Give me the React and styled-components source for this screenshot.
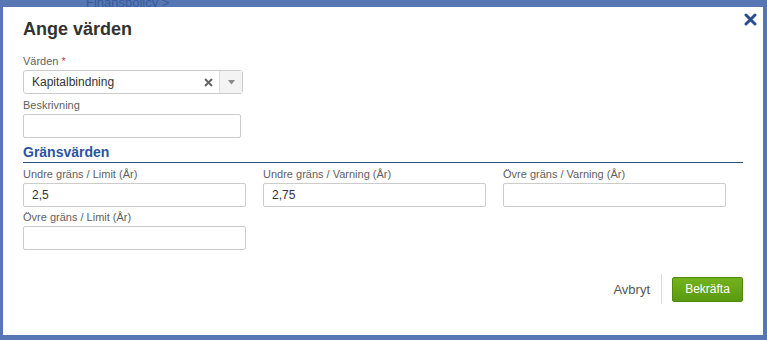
import React from "react";
import styled, { createGlobalStyle } from "styled-components";

const Global = createGlobalStyle`
  html, body { margin: 0; padding: 0; }
  body {
    width: 767px; height: 340px; overflow: hidden;
    background: #5677b4;
    font-family: "Liberation Sans", Arial, sans-serif;
  }
`;

const Backdrop = styled.div`
  position: relative;
  width: 767px;
  height: 340px;
  box-sizing: border-box;
  padding: 7px 4px 5px 3px;
`;

const BehindText = styled.div`
  position: absolute;
  left: 86px;
  top: -5px;
  font-size: 13px;
  line-height: 15px;
  color: #3a5a9a;
`;

const Modal = styled.div`
  position: relative;
  background: #fff;
  height: 328px;
  box-sizing: border-box;
  padding: 9px 20px 0 20px;
  display: flex;
  flex-direction: column;
`;

const Title = styled.h1`
  margin: 0;
  font-size: 18px;
  font-weight: bold;
  color: #333;
  height: 26px;
  line-height: 26px;
`;

const Close = styled.button`
  position: absolute;
  right: 5px;
  top: 4px;
  width: 16px;
  height: 16px;
  padding: 0;
  border: none;
  background: none;
  display: flex;
  align-items: center;
  justify-content: center;
`;

const Field = styled.div`
  display: flex;
  flex-direction: column;
  width: ${p => p.w}px;
`;

const Label = styled.label`
  font-size: 11px;
  color: #5f5f5f;
  height: 14px;
  line-height: 14px;
  margin-bottom: 2px;
  .req { color: #c33; }
`;

const Input = styled.div`
  box-sizing: border-box;
  height: 24px;
  border: 1px solid #ccc;
  border-radius: 2px;
  font-size: 12px;
  color: #333;
  line-height: 22px;
  padding: 0 8px;
  background: #fff;
`;

const Select = styled.div`
  box-sizing: border-box;
  height: 24px;
  border: 1px solid #ccc;
  border-radius: 3px;
  display: flex;
  align-items: stretch;
  font-size: 12px;
  color: #333;
`;

const SelectValue = styled.div`
  flex: 1;
  line-height: 22px;
  padding-left: 8px;
`;

const ClearBtn = styled.div`
  width: 22px;
  display: flex;
  align-items: center;
  justify-content: center;
`;

const Arrow = styled.div`
  width: 22px;
  border-left: 1px solid #ddd;
  background: #f3f3f3;
  display: flex;
  align-items: center;
  justify-content: center;
`;

const Section = styled.div`
  margin-top: 6px;
  padding-bottom: 1px;
  border-bottom: 1px solid #2c4f86;
  font-size: 14px;
  font-weight: bold;
  color: #2a54a0;
  height: 17px;
  line-height: 17px;
`;

const Grid = styled.div`
  display: grid;
  grid-template-columns: repeat(3, 223px);
  column-gap: 17px;
  row-gap: 3px;
  margin-top: 4px;
`;

const Stack = styled.div`
  display: flex;
  flex-direction: column;
  gap: ${p => p.gap}px;
  margin-top: ${p => p.mt || 0}px;
`;

const Footer = styled.div`
  margin-top: auto;
  margin-bottom: 31px;
  display: flex;
  align-items: center;
  justify-content: flex-end;
`;

const Cancel = styled.button`
  border: none;
  background: none;
  font-family: inherit;
  font-size: 13px;
  color: #555;
  padding: 0 11px 0 0;
  height: 30px;
  border-right: 1px solid #ddd;
  margin-right: 10px;
`;

const Confirm = styled.button`
  font-family: inherit;
  font-size: 12px;
  color: #fff;
  height: 25px;
  width: 71px;
  border: 1px solid #4d8a0c;
  border-radius: 2px;
  background: linear-gradient(#74b21d, #5a9a10);
  padding: 0;
`;

const TextField = ({ label, value, w = 223 }) => (
  <Field w={w}>
    <Label>{label}</Label>
    <Input>{value}</Input>
  </Field>
);

export default function App() {
  return (
    <>
      <Global />
      <Backdrop>
        <BehindText>Finanspolicy &gt;</BehindText>
        <Modal>
          <Close aria-label="Stäng">
            <svg width="13" height="13" viewBox="0 0 13 13">
              <path d="M2 2 L11 11 M11 2 L2 11" stroke="#2b4c93" strokeWidth="3" strokeLinecap="round" />
            </svg>
          </Close>
          <Title>Ange värden</Title>
          <Stack gap={4} mt={12}>
            <Field w={220}>
              <Label>Värden <span className="req">*</span></Label>
              <Select>
                <SelectValue>Kapitalbindning</SelectValue>
                <ClearBtn>
                  <svg width="9" height="9" viewBox="0 0 9 9">
                    <path d="M1 1 L8 8 M8 1 L1 8" stroke="#666" strokeWidth="2" />
                  </svg>
                </ClearBtn>
                <Arrow>
                  <svg width="7" height="5" viewBox="0 0 7 5">
                    <path d="M0 0 H7 L3.5 4.5 Z" fill="#888" />
                  </svg>
                </Arrow>
              </Select>
            </Field>
            <TextField label="Beskrivning" w={218} />
          </Stack>
          <Section>Gränsvärden</Section>
          <Grid>
            <TextField label="Undre gräns / Limit (År)" value="2,5" />
            <TextField label="Undre gräns / Varning (År)" value="2,75" />
            <TextField label="Övre gräns / Varning (År)" />
            <TextField label="Övre gräns / Limit (År)" />
          </Grid>
          <Footer>
            <Cancel>Avbryt</Cancel>
            <Confirm>Bekräfta</Confirm>
          </Footer>
        </Modal>
      </Backdrop>
    </>
  );
}
